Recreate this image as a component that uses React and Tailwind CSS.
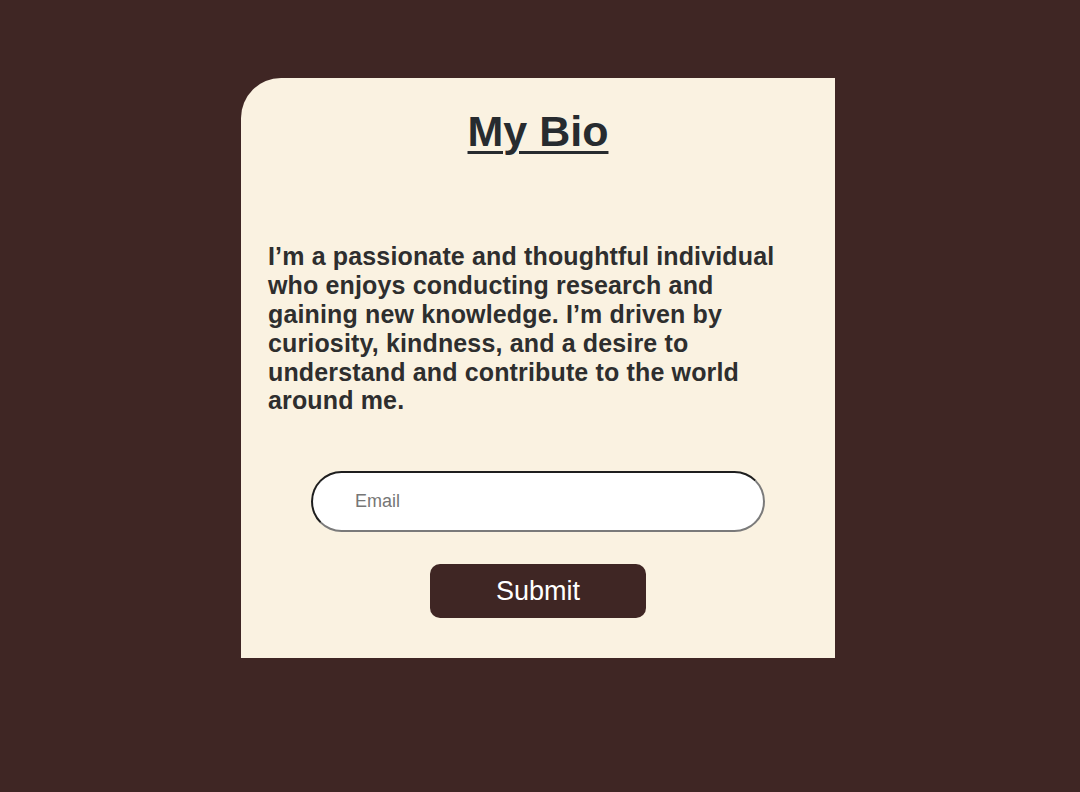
import React from 'react';

export default function App() {
  return (
    <div className="min-h-[792px] w-full bg-[#3f2624] pt-[78px] pb-[134px] font-['Liberation_Sans',Arial,sans-serif]">
      <div className="ml-[241px] flex w-[594px] h-[580px] flex-col items-center rounded-tl-[40px] bg-[#faf2e1] px-[27px] pt-[29px]">
        <h1 className="text-[43px] leading-[1.149] font-bold text-[#272b2f] underline underline-offset-[5px] decoration-[3px]">
          My Bio
        </h1>

        <p className="mt-[86px] w-full max-w-[525px] self-start text-[25px] leading-[28.8px] tracking-[0.15px] font-bold text-[#2e2e2e]">
          I’m a passionate and thoughtful individual who enjoys conducting research and gaining new knowledge. I’m driven by curiosity, kindness, and a desire to understand and contribute to the world around me.
        </p>

        <input
          type="email"
          placeholder="Email"
          className="mt-[56px] h-[61px] w-[454px] rounded-full border-2 border-t-[#1e1e1e] border-l-[#1e1e1e] border-b-[#7a7a7a] border-r-[#7a7a7a] bg-white pl-[42px] text-[18px] text-[#333] placeholder:text-[#767676] outline-none"
        />

        <button className="mt-[32px] h-[54px] w-[216px] rounded-[10px] bg-[#3f2624] text-[27px] text-white">
          Submit
        </button>
      </div>
    </div>
  );
}
